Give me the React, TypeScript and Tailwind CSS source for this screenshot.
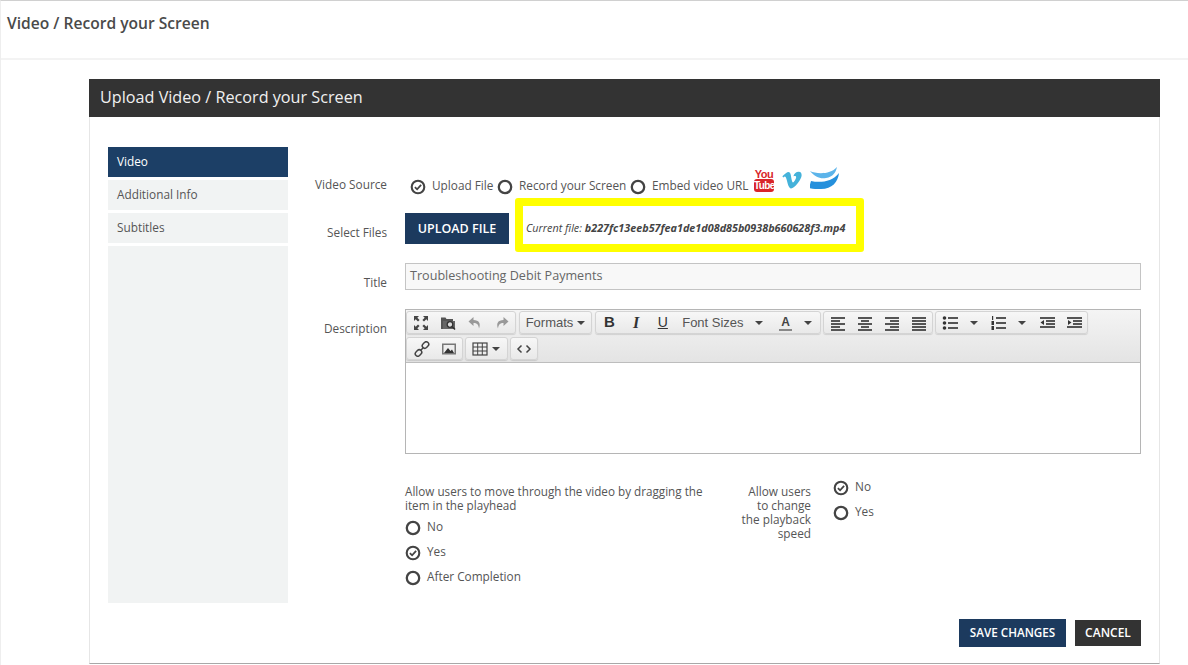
import React from "react";
import { FaVimeoV } from "react-icons/fa";

const Radio = ({ checked = false }: { checked?: boolean }) => (
  <svg width="16" height="16" viewBox="0 0 16 16" className="shrink-0">
    <circle cx="8" cy="8" r={checked ? 6.3 : 6.2} fill="none" stroke="#444" strokeWidth={checked ? 2.1 : 2.3} />
    {checked && <path d="M4.9 8.1l2.2 2.2 4-4.4" fill="none" stroke="#444" strokeWidth="1.8" />}
  </svg>
);

const Icon = ({ children, w = 16 }: { children: React.ReactNode; w?: number }) => (
  <svg width={w} height="16" viewBox={`0 0 ${w} 16`} fill="#555">
    {children}
  </svg>
);

const Caret = () => <span className="inline-block w-0 h-0 border-x-[4px] border-x-transparent border-t-[4px] border-t-[#444]" />;

const lines = (rows: [number, number][]) =>
  rows.map(([x, w], i) => <rect key={i} x={x} y={2 + i * 3} width={w} height="2" />);

const AlignLeft = () => <Icon>{lines([[1, 14], [1, 9], [1, 14], [1, 9], [1, 14]])}</Icon>;
const AlignCenter = () => <Icon>{lines([[1, 14], [4, 8], [1, 14], [4, 8], [1, 14]])}</Icon>;
const AlignRight = () => <Icon>{lines([[1, 14], [6, 9], [1, 14], [6, 9], [1, 14]])}</Icon>;
const AlignFull = () => <Icon>{lines([[1, 14], [1, 14], [1, 14], [1, 14], [1, 14]])}</Icon>;

const BulletList = () => (
  <Icon>
    <circle cx="2.5" cy="3" r="1.8" fill="#333" />
    <circle cx="2.5" cy="8" r="1.8" fill="#333" />
    <circle cx="2.5" cy="13" r="1.8" fill="#333" />
    <rect x="6" y="2" width="10" height="2" />
    <rect x="6" y="7" width="10" height="2" />
    <rect x="6" y="12" width="10" height="2" />
  </Icon>
);

const NumberList = () => (
  <Icon>
    <rect x="2" y="1" width="1.2" height="4" fill="#333" />
    <rect x="1.5" y="6" width="2.5" height="4" fill="#333" />
    <rect x="1.5" y="11" width="2.5" height="4" fill="#333" />
    <rect x="6" y="2" width="10" height="2" />
    <rect x="6" y="7" width="10" height="2" />
    <rect x="6" y="12" width="10" height="2" />
  </Icon>
);

const Outdent = () => (
  <Icon>
    <rect x="1" y="2" width="15" height="2" />
    <rect x="7" y="5" width="9" height="2" />
    <rect x="7" y="8" width="9" height="2" />
    <rect x="1" y="11" width="15" height="2" />
    <path d="M5 5v5L1.5 7.5z" fill="#333" />
  </Icon>
);

const Indent = () => (
  <Icon>
    <rect x="1" y="2" width="15" height="2" />
    <rect x="7" y="5" width="9" height="2" />
    <rect x="7" y="8" width="9" height="2" />
    <rect x="1" y="11" width="15" height="2" />
    <path d="M2 5v5l3.5-2.5z" fill="#333" />
  </Icon>
);

const Fullscreen = () => (
  <Icon>
    <g fill="#444">
      <path d="M1 1h5L4.3 2.7 6.6 5 5 6.6 2.7 4.3 1 6z" />
      <path d="M15 1v5l-1.7-1.7L11 6.6 9.4 5l2.3-2.3L10 1z" />
      <path d="M1 15v-5l1.7 1.7L5 9.4 6.6 11l-2.3 2.3L6 15z" />
      <path d="M15 15h-5l1.7-1.7L9.4 11 11 9.4l2.3 2.3L15 10z" />
    </g>
  </Icon>
);

const FolderSearch = () => (
  <Icon>
    <path d="M1 4V2.500h4.500L6.500 4H13v2H3v8H1z" fill="#555" />
    <path d="M3 6h12v8H3z" fill="#666" />
    <circle cx="10" cy="9.500" r="2.800" fill="#ddd" stroke="#333" strokeWidth="1.300" />
    <path d="M12 11.500l3 3" stroke="#333" strokeWidth="1.600" />
  </Icon>
);

const Undo = ({ flip = false }: { flip?: boolean }) => (
  <Icon>
    <path
      d="M6.500 2L1.500 6.500 6.500 11V8c3.500 0 5 1.500 5.500 5.500C14 8.500 12 5 6.500 5z"
      fill="#999"
      transform={flip ? "matrix(-1 0 0 1 16 0)" : undefined}
    />
  </Icon>
);

const LinkIcon = () => (
  <Icon>
    <g fill="none" stroke="#444" strokeWidth="1.500">
      <rect x="8" y="1.500" width="7" height="5" rx="2.500" transform="rotate(-45 11.500 4)" />
      <rect x="1" y="9.500" width="7" height="5" rx="2.500" transform="rotate(-45 4.500 12)" />
      <path d="M6.500 9.500l3-3" />
    </g>
  </Icon>
);

const ImageIcon = () => (
  <Icon>
    <rect x="1" y="2.500" width="14" height="11" fill="#777" />
    <rect x="2.500" y="4" width="11" height="8" fill="#eee" />
    <path d="M3 12l4-5 2.500 3 1.500-1.500 2 3.500z" fill="#333" />
  </Icon>
);

const TableIcon = () => (
  <Icon>
    <rect x="1" y="2" width="14" height="12" fill="none" stroke="#444" strokeWidth="1.200" />
    <path d="M5.700 2v12M10.300 2v12M1 6h14M1 10h14" stroke="#444" strokeWidth="1" />
  </Icon>
);

const CodeIcon = () => (
  <Icon>
    <path d="M5.500 4.500L2 8l3.500 3.500M10.500 4.500L14 8l-3.500 3.500" fill="none" stroke="#444" strokeWidth="1.500" />
  </Icon>
);

const Btn = ({ w = 27, children }: { w?: number; children: React.ReactNode }) => (
  <div className="flex items-center justify-center h-full gap-[6px]" style={{ width: w }}>
    {children}
  </div>
);

const Group = ({ w, ml = 0, children }: { w: number; ml?: number; children: React.ReactNode }) => (
  <div
    className="flex items-center justify-end h-[23px] rounded-[3px] border border-[#d4d4d4] bg-gradient-to-b from-[#f7f7f7] to-[#e9e9e9] shadow-[0_1px_1px_rgba(0,0,0,0.12)]"
    style={{ width: w, marginLeft: ml }}
  >
    {children}
  </div>
);

const Option = ({ label, checked = false }: { label: string; checked?: boolean }) => (
  <div className="flex items-center gap-[6px] h-[25px] text-[11.8px] text-[#555]">
    <Radio checked={checked} />
    <span className="-mt-[2px]">{label}</span>
  </div>
);

const Toolbar = () => (
  <div className="h-[53px] bg-gradient-to-b from-[#f4f4f4] to-[#e4e4e4] border-b border-[#bdbdbd] pt-[1px] flex flex-col gap-[3px]">
    <div className="flex items-center">
      <Group w={110}>
        <Btn><Fullscreen /></Btn>
        <Btn><FolderSearch /></Btn>
        <Btn><Undo /></Btn>
        <Btn><Undo flip /></Btn>
      </Group>
      <Group w={73} ml={3}>
        <div className="flex items-center justify-center gap-[4px] w-full font-['Liberation_Sans',sans-serif] text-[13px] text-[#555]">
          Formats <Caret />
        </div>
      </Group>
      <Group w={226} ml={3}>
        <Btn><span className="font-['Liberation_Sans',sans-serif] font-bold text-[15px] text-[#333]">B</span></Btn>
        <Btn><span className="font-['Liberation_Serif',serif] font-bold italic text-[16px] text-[#333]">I</span></Btn>
        <Btn><span className="font-['Liberation_Sans',sans-serif] text-[14px] text-[#333] underline">U</span></Btn>
        <div className="flex items-center justify-between w-[97px] pl-[6px] pr-[9px] font-['Liberation_Sans',sans-serif] text-[13px] text-[#555]">
          Font Sizes <Caret />
        </div>
        <div className="flex items-center justify-between w-[48px] pl-[7px] pr-[8px]">
          <span className="font-['Liberation_Sans',sans-serif] font-bold text-[12px] text-[#444] border-b-2 border-[#888] leading-[14px] px-[2px]">A</span>
          <Caret />
        </div>
      </Group>
      <Group w={110} ml={2}>
        <Btn><AlignLeft /></Btn>
        <Btn><AlignCenter /></Btn>
        <Btn><AlignRight /></Btn>
        <Btn><AlignFull /></Btn>
      </Group>
      <Group w={153} ml={2}>
        <div className="flex items-center justify-between w-[50px] pl-[6px] pr-[8px]"><BulletList /><Caret /></div>
        <div className="flex items-center justify-between w-[47px] pl-[4px] pr-[7px]"><NumberList /><Caret /></div>
        <Btn><Outdent /></Btn>
        <Btn><Indent /></Btn>
      </Group>
    </div>
    <div className="flex items-center">
      <Group w={57}>
        <Btn><LinkIcon /></Btn>
        <Btn><ImageIcon /></Btn>
      </Group>
      <Group w={43} ml={2}>
        <div className="flex items-center gap-[4px] w-full pl-[6px]"><TableIcon /><Caret /></div>
      </Group>
      <Group w={28} ml={2}>
        <Btn><CodeIcon /></Btn>
      </Group>
    </div>
  </div>
);

const YoutubeLogo = () => (
  <div className="flex flex-col items-center w-[20px] font-['Liberation_Sans',sans-serif] font-bold text-[#d9252a]">
    <span className="text-[11px] leading-[10px] tracking-[-0.5px]">You</span>
    <span className="bg-[#d9252a] text-white rounded-[3px] text-[10px] leading-[13px] w-[20px] text-center tracking-[-0.6px]">Tube</span>
  </div>
);

const WaveLogo = () => (
  <svg width="30" height="23" viewBox="0 0 30 23" className="-mt-[4px]">
    <path d="M0 4c6 3 20 4 27-4-1 5-4 10-11 11-6 1-11-1-16-7z" fill="#5cb4ea" />
    <path d="M1 14c9 2 21 1 28-8-1 9-7 16-18 16-5 0-8 0-12-1z" fill="#2590dc" />
  </svg>
);

export default function App() {
  return (
    <div className="w-[1188px] h-[665px] overflow-hidden bg-white font-['Open_Sans',sans-serif] border-t border-[#d0d0d0] border-l border-l-[#eeeeee]">
      <div className="h-[59px] border-b-2 border-[#f3f3f3] pl-[6px] pt-[11px] text-[15.6px] font-semibold text-[#4a4a4a]">
        Video / Record your Screen
      </div>

      <div className="ml-[88px] mt-[19px] w-[1071px] h-[585px] border-x border-b border-x-[#e6e6e6] border-b-[#a8a8a8]">
        <div className="h-[38px] -mx-px bg-[#333333] pl-[11px] pb-[1px] flex items-center text-[16.2px] text-[#f0f0f0]">
          Upload Video / Record your Screen
        </div>

        <div className="flex pl-[18px] pt-[30px]">
          <div className="w-[180px] h-[456px] flex flex-col gap-[3px] text-[11.8px] shrink-0">
            <div className="h-[30px] bg-[#1c3f66] text-white pl-[9px] flex items-center">Video</div>
            <div className="h-[30px] bg-[#f1f3f3] text-[#555] pl-[9px] flex items-center">Additional Info</div>
            <div className="h-[30px] bg-[#f1f3f3] text-[#555] pl-[9px] flex items-center">Subtitles</div>
            <div className="flex-1 bg-[#f1f3f3]" />
          </div>

          <div className="flex-1">
            <div className="flex items-center h-[36px] mt-[22px]">
              <div className="w-[99px] text-right text-[11.8px] text-[#555] shrink-0 -mt-[4px]">Video Source</div>
              <div className="flex items-center ml-[23px] text-[11.8px] text-[#555]">
                <Radio checked />
                <span className="ml-[6px] w-[65px] -mt-[2px]">Upload File</span>
                <Radio />
                <span className="ml-[6px] w-[111px] -mt-[2px]">Record your Screen</span>
                <Radio />
                <span className="ml-[6px] w-[102px] -mt-[2px]">Embed video URL</span>
                <div className="flex items-center gap-[7px] -mt-[14px]">
                  <YoutubeLogo />
                  <FaVimeoV className="text-[#44b2da] text-[22px]" />
                  <WaveLogo />
                </div>
              </div>
            </div>

            <div className="flex items-center h-[54px] -mt-[7px]">
              <div className="w-[99px] text-right text-[11.8px] text-[#555] shrink-0 mt-[16px]">Select Files</div>
              <button className="ml-[18px] w-[104px] h-[31px] mt-[6px] pt-[2px] bg-[#1c3a5e] text-white font-semibold text-[12.5px]">UPLOAD FILE</button>
              <div className="ml-[6px] w-[349px] h-[54px] border-[8px] border-[#ffff00] rounded-[3px] pl-[3px] pt-[6px] flex items-center text-[10.8px] italic text-[#444] whitespace-nowrap">
                Current file:&nbsp;<b className="font-bold">b227fc13eeb57fea1de1d08d85b0938b660628f3.mp4</b>
              </div>
            </div>

            <div className="flex h-[27px] mt-[11px]">
              <div className="w-[99px] text-right text-[11.8px] text-[#555] shrink-0 mt-[11px]">Title</div>
              <div className="ml-[18px] w-[736px] bg-[#f8f8f8] border border-[#c4c4c4] pl-[4px] flex items-center text-[12.6px] text-[#666]">
                Troubleshooting Debit Payments
              </div>
            </div>

            <div className="flex mt-[19px]">
              <div className="w-[99px] text-right text-[11.8px] text-[#555] shrink-0 mt-[11px]">Description</div>
              <div className="ml-[18px] w-[736px] h-[145px] border border-[#b5b5b5]">
                <Toolbar />
              </div>
            </div>

            <div className="flex mt-[30px] ml-[117px]">
              <div className="w-[310px] shrink-0">
                <div className="text-[11.7px] leading-[14px] text-[#555] mb-[3px]">
                  Allow users to move through the video by dragging the item in the playhead
                </div>
                <Option label="No" />
                <Option label="Yes" checked />
                <Option label="After Completion" />
              </div>
              <div className="w-[96px] text-right text-[11.8px] leading-[14px] text-[#555] shrink-0">
                Allow users<br />to change<br />the playback<br />speed
              </div>
              <div className="ml-[22px] -mt-[9px]">
                <Option label="No" checked />
                <Option label="Yes" />
              </div>
            </div>

            <div className="flex justify-end items-center gap-[9px] w-[853px] mt-[29px]">
              <button className="w-[107px] h-[28px] bg-[#1c3a5e] text-white font-semibold text-[11.7px]">SAVE CHANGES</button>
              <button className="w-[66px] h-[26px] bg-[#333333] text-white font-semibold text-[12px]">CANCEL</button>
            </div>
          </div>
        </div>
      </div>
    </div>
  );
}
